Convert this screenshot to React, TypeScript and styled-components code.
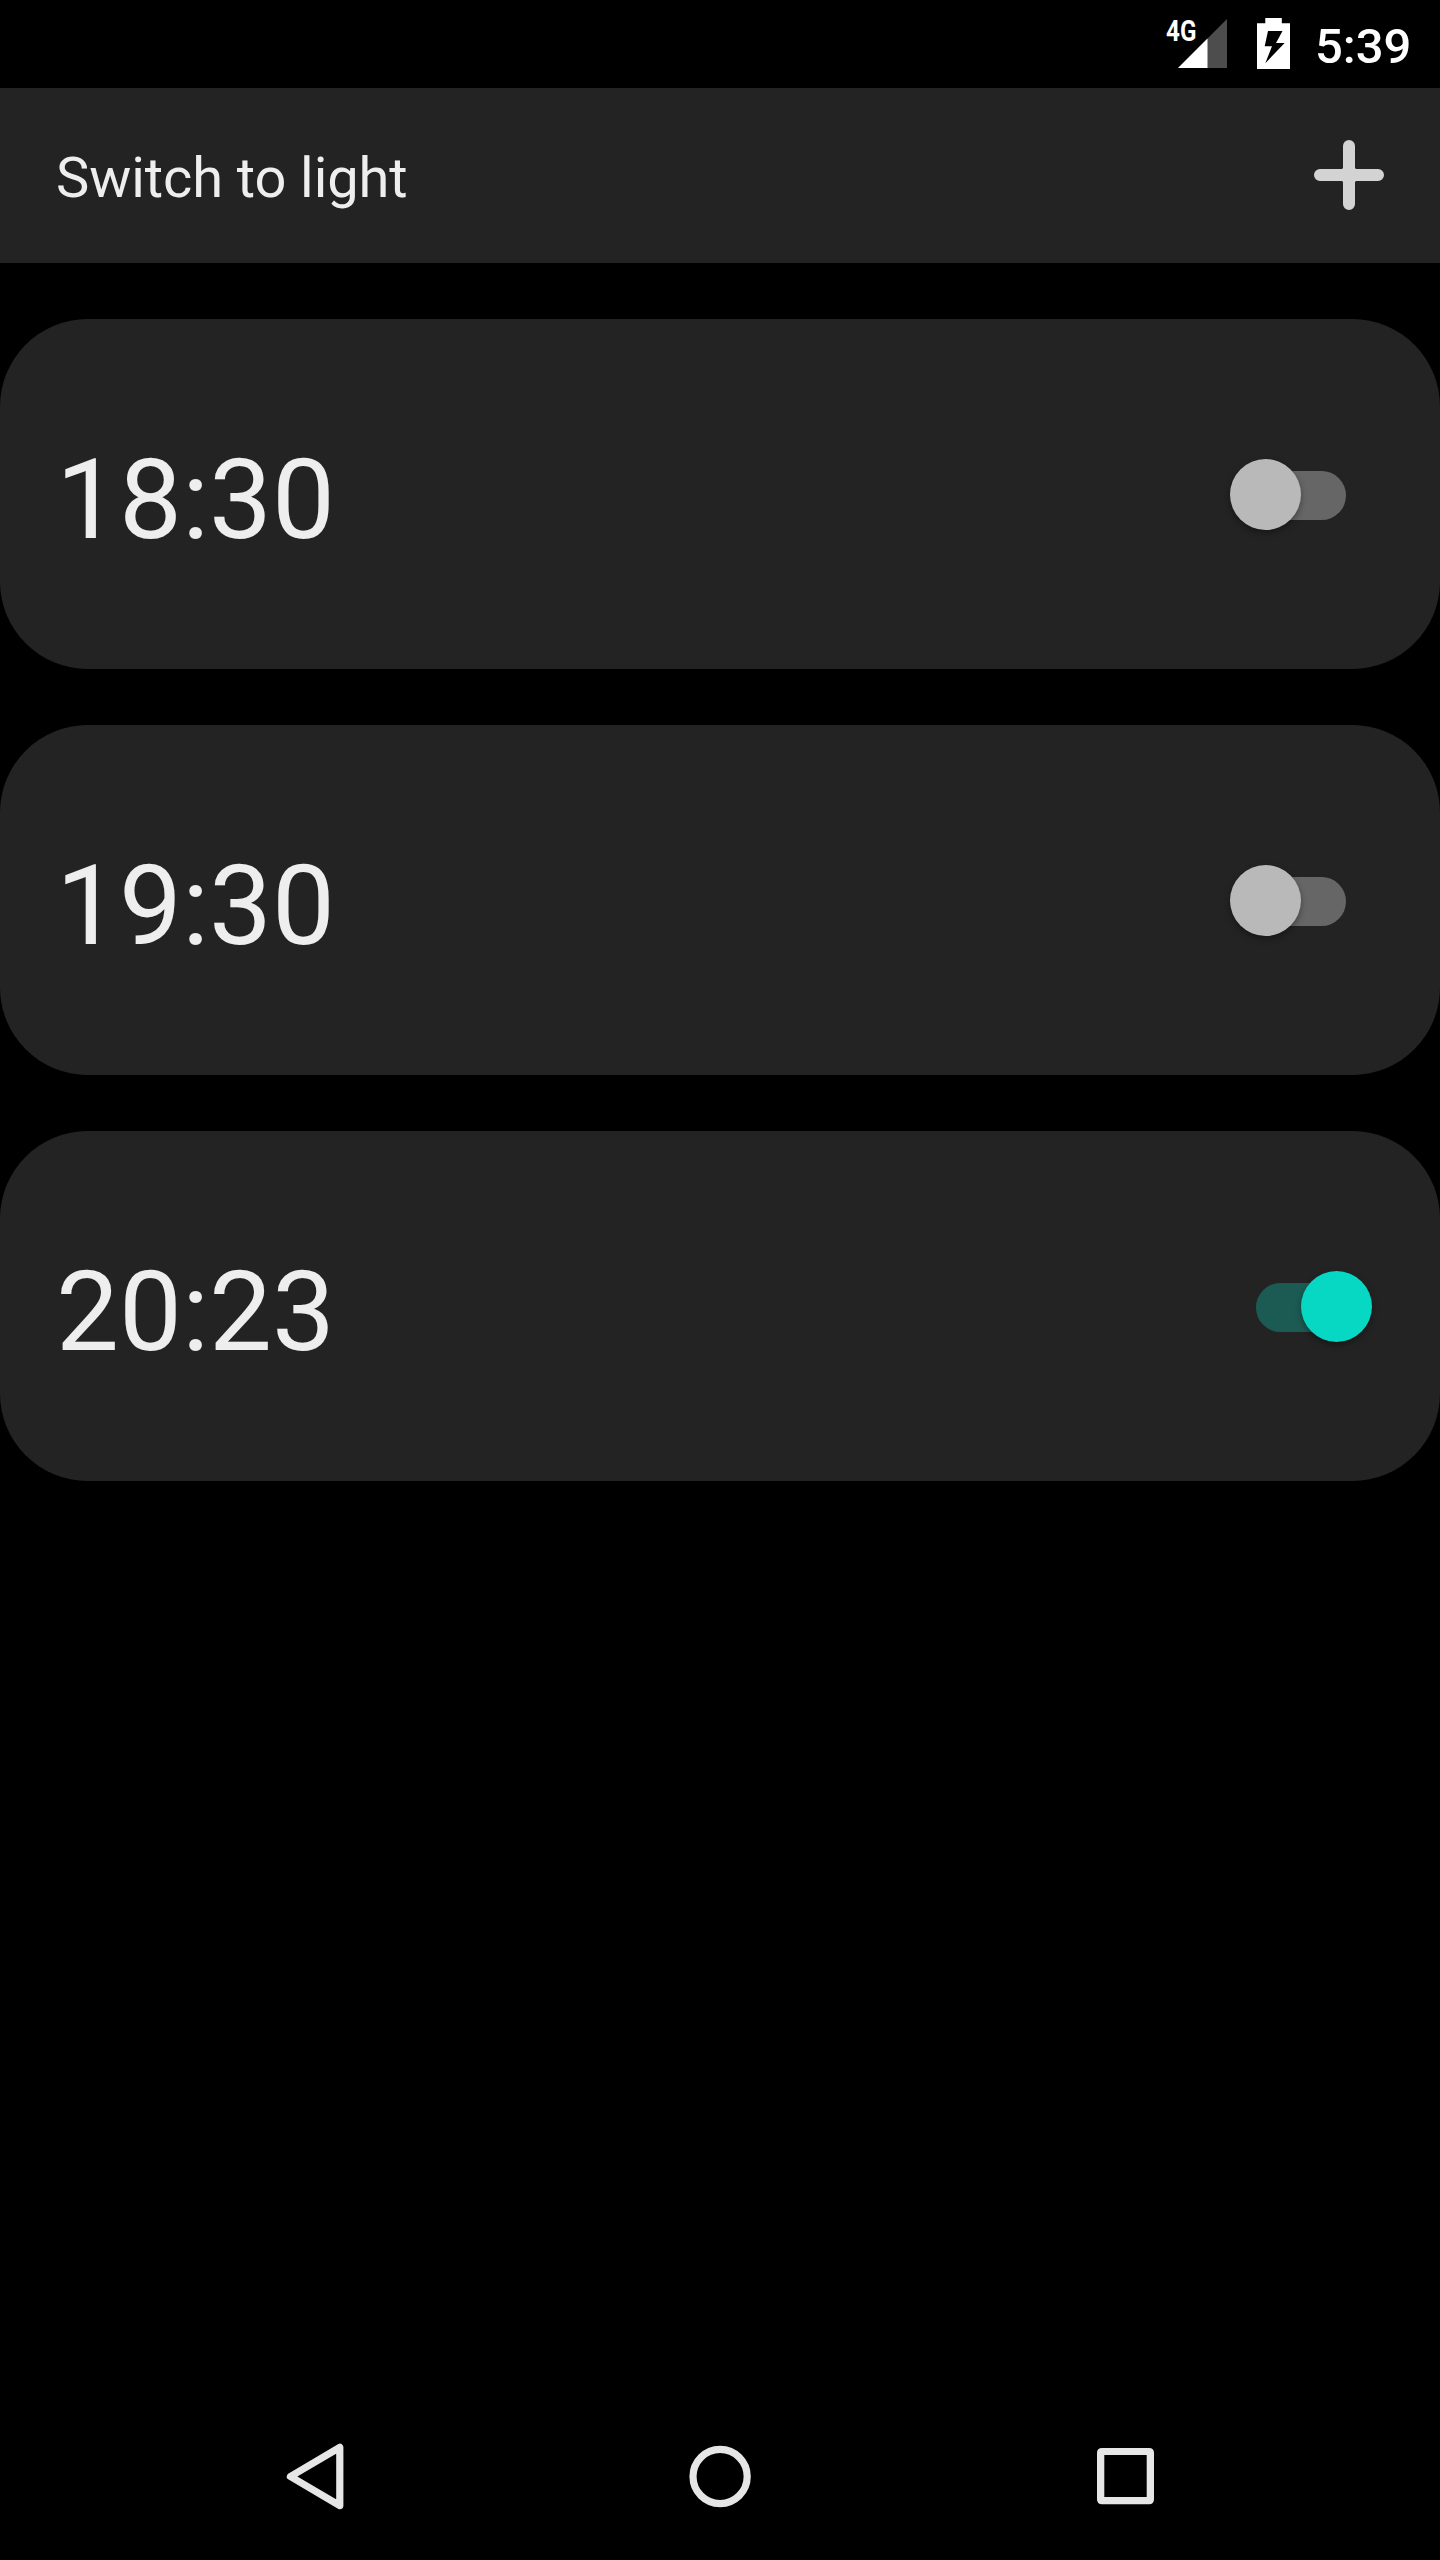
import React, { useState } from "react";
import styled, { createGlobalStyle } from "styled-components";

const GlobalStyle = createGlobalStyle`
  body {
    margin: 0;
    background: #000;
    font-family: Roboto, "Liberation Sans", sans-serif;
  }
`;

const Screen = styled.div`
  display: flex;
  flex-direction: column;
  width: 1440px;
  height: 2560px;
  background: #000;
  overflow: hidden;
`;

const StatusBar = styled.div`
  display: flex;
  justify-content: flex-end;
  align-items: flex-start;
  box-sizing: border-box;
  height: 88px;
  padding-right: 28px;
  color: #fff;
`;

const NetworkLabel = styled.span`
  width: 12px;
  padding-top: 13px;
  font-size: 29.5px;
  line-height: 36px;
  font-weight: 700;
  white-space: nowrap;
  transform: scaleX(0.82);
  transform-origin: left;
`;

const SignalIcon = styled.svg`
  width: 49px;
  height: 49px;
  margin-top: 19px;
`;

const BatteryIcon = styled.svg`
  width: 33px;
  height: 51px;
  margin: 18px 25px 0 30px;
`;

const Clock = styled.span`
  width: 97px;
  padding-top: 18px;
  font-size: 49px;
  line-height: 57px;
  font-weight: 500;
  white-space: nowrap;
`;

const Toolbar = styled.header`
  display: flex;
  align-items: center;
  justify-content: space-between;
  box-sizing: border-box;
  height: 175px;
  padding: 0 56px;
  background: #232323;
`;

const ThemeButton = styled.button`
  border: 0;
  padding: 5px 0 0;
  background: none;
  color: #eee;
  font: 400 56px/66px Roboto, "Liberation Sans", sans-serif;
  letter-spacing: -0.08px;
`;

const AddButton = styled.button`
  display: flex;
  border: 0;
  padding: 0 0 1px;
  background: none;
`;

const AlarmList = styled.main`
  display: flex;
  flex: 1;
  flex-direction: column;
  gap: 56px;
  padding-top: 56px;
`;

const AlarmCard = styled.section`
  display: flex;
  align-items: center;
  justify-content: space-between;
  box-sizing: border-box;
  height: 350px;
  padding: 0 68px 0 56px;
  border-radius: 87.5px;
  background: #232323;
`;

const AlarmTime = styled.span`
  padding-top: 11px;
  color: #eee;
  font-size: 112px;
  line-height: 131px;
`;

const Switch = styled.button<{ $on: boolean }>`
  display: flex;
  align-items: center;
  justify-content: ${(p) => (p.$on ? "flex-end" : "flex-start")};
  width: 142px;
  height: 71px;
  margin-top: 1px;
  border: 0;
  padding: 0;
  background: none;
`;

const Track = styled.span<{ $on: boolean }>`
  display: flex;
  align-items: center;
  justify-content: ${(p) => (p.$on ? "flex-end" : "flex-start")};
  width: 90px;
  height: 49px;
  margin: 2px 26px 0;
  border-radius: 24.5px;
  background: ${(p) => (p.$on ? "#1c5b54" : "#666")};
`;

const Thumb = styled.span<{ $on: boolean }>`
  flex: none;
  width: 71px;
  height: 71px;
  margin: 0 -26px 2px;
  border-radius: 50%;
  background: ${(p) => (p.$on ? "#06d8c4" : "#b9b9b9")};
  box-shadow: 0 3px 6px rgba(0, 0, 0, 0.35);
`;

const NavBar = styled.nav`
  display: flex;
  align-items: center;
  justify-content: space-between;
  box-sizing: border-box;
  height: 168px;
  padding: 0 272px;
`;

const NavIcon = styled.svg`
  width: 84px;
  height: 84px;
  fill: none;
  stroke: #e6e6e6;
  stroke-width: 7.2;
`;

function AlarmRow({ time, initial }: { time: string; initial: boolean }) {
  const [on, setOn] = useState(initial);
  return (
    <AlarmCard>
      <AlarmTime>{time}</AlarmTime>
      <Switch $on={on} role="switch" aria-checked={on} onClick={() => setOn(!on)}>
        <Track $on={on}>
          <Thumb $on={on} />
        </Track>
      </Switch>
    </AlarmCard>
  );
}

const alarms = [
  { time: "18:30", on: false },
  { time: "19:30", on: false },
  { time: "20:23", on: true },
];

export default function App() {
  return (
    <Screen>
      <GlobalStyle />
      <StatusBar>
        <NetworkLabel>4G</NetworkLabel>
        <SignalIcon viewBox="0 0 49 49">
          <path d="M49 0V49H0z" fill="#4d4d4d" />
          <path d="M29.5 19.5V49H0z" fill="#fff" />
        </SignalIcon>
        <BatteryIcon viewBox="0 0 33 51">
          <path
            fillRule="evenodd"
            fill="#fff"
            d="M8.3 0H24.8V5.2H33V51H0V5.2H8.3zM11 13L7.7 28.3H15L8.3 45.3L27.6 25H19L25.5 13z"
          />
        </BatteryIcon>
        <Clock>5:39</Clock>
      </StatusBar>
      <Toolbar>
        <ThemeButton>Switch to light</ThemeButton>
        <AddButton>
          <svg width="70" height="70" viewBox="0 0 70 70">
            <path d="M35 6V64M6 35H64" stroke="#d3d3d3" strokeWidth="12" strokeLinecap="round" />
            <path d="M28 29L29 28H41L42 29V41L41 42H29L28 41z" fill="#d3d3d3" />
          </svg>
        </AddButton>
      </Toolbar>
      <AlarmList>
        {alarms.map((a) => (
          <AlarmRow key={a.time} time={a.time} initial={a.on} />
        ))}
      </AlarmList>
      <NavBar>
        <NavIcon viewBox="0 0 84 84">
          <path d="M67.8 13.4V71.6L18.4 42.5z" strokeLinejoin="round" />
        </NavIcon>
        <NavIcon viewBox="0 0 84 84">
          <circle cx="42.1" cy="42.5" r="27.1" />
        </NavIcon>
        <NavIcon viewBox="0 0 84 84">
          <path
            d="M19 14H65Q70 14 70 19V65.3Q70 70.3 65 70.3H18Q13 70.3 13 65.3V19Q13 14 18 14zM20.3 21V63H62.7V21z"
            fill="#e6e6e6"
            fillRule="evenodd"
            stroke="none"
          />
        </NavIcon>
      </NavBar>
    </Screen>
  );
}
